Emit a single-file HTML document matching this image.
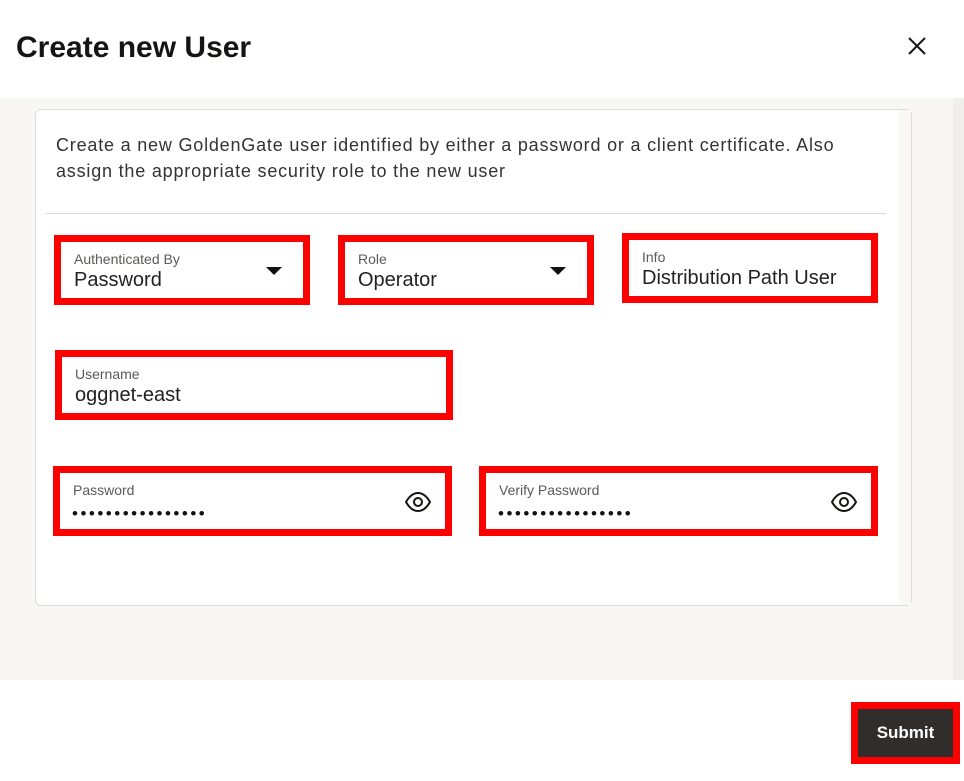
<!DOCTYPE html>
<html><head><meta charset="utf-8"><style>
*{margin:0;padding:0;box-sizing:border-box}
body{width:964px;height:781px;background:#fff;position:relative;overflow:hidden;font-family:"Liberation Sans",sans-serif;color:#161513}
.abs{position:absolute}
h1{position:absolute;left:16px;top:31px;font-size:30px;font-weight:bold;color:#161513}
.band{left:0;top:98px;width:953px;height:582px;background:#f8f7f5}
.osb{left:953px;top:98px;width:11px;height:582px;background:#efeeec}
.card{left:35px;top:109px;width:877px;height:497px;background:#fff;border:1px solid #dedcd8;border-radius:6px}
.csb{left:899px;top:110px;width:12px;height:495px;background:#f9f8f7}
.desc{left:56px;top:132px;font-size:18px;line-height:26px;color:#333;width:825px;letter-spacing:0.8px}
.div{left:46px;top:213px;width:840px;height:1px;background:#dcdad6}
.f{position:absolute;border:7px solid #f00;background:#fff}
.lab{position:absolute;left:13px;top:9px;font-size:14px;color:#5c5a57}
.val{position:absolute;left:13px;top:27px;font-size:20px;color:#222}
.dots{position:absolute;left:12px;top:31px;font-size:17px;letter-spacing:2.5px;color:#111}
.arr{position:absolute;right:21px;top:25px;width:0;height:0;border-left:8px solid transparent;border-right:8px solid transparent;border-top:8px solid #111}
.eye{position:absolute;right:13px;top:18px}
.btn{left:851px;top:702px;width:109px;height:62px;border:7px solid #f00;background:#312d2a;color:#fff;font-weight:bold;font-size:17px;text-align:center;line-height:47px}
</style></head><body>
<h1>Create new User</h1>
<svg class="abs" style="left:907px;top:36px" width="20" height="20" viewBox="0 0 20 20"><path d="M2 2L18 18M18 2L2 18" stroke="#161513" stroke-width="2"/></svg>
<div class="abs band"></div>
<div class="abs osb"></div>
<div class="abs card"></div>
<div class="abs csb"></div>
<div class="abs desc">Create a new GoldenGate user identified by either a password or a client certificate. Also assign the appropriate security role to the new user</div>
<div class="abs div"></div>

<div class="f" style="left:54px;top:235px;width:256px;height:70px"><div class="lab">Authenticated By</div><div class="val">Password</div><div class="arr"></div></div>
<div class="f" style="left:338px;top:235px;width:256px;height:70px"><div class="lab">Role</div><div class="val">Operator</div><div class="arr"></div></div>
<div class="f" style="left:622px;top:233px;width:256px;height:70px"><div class="lab">Info</div><div class="val">Distribution Path User</div></div>
<div class="f" style="left:55px;top:350px;width:398px;height:70px"><div class="lab">Username</div><div class="val">oggnet-east</div></div>
<div class="f" style="left:53px;top:466px;width:399px;height:70px"><div class="lab">Password</div><div class="dots">••••••••••••••••</div>
<svg class="eye" width="28" height="22" viewBox="0 0 28 22"><path d="M2 11C6 4 10 2 14 2S22 4 26 11C22 18 18 20 14 20S6 18 2 11Z" fill="none" stroke="#161513" stroke-width="2"/><circle cx="14" cy="11" r="4" fill="none" stroke="#161513" stroke-width="2"/></svg></div>
<div class="f" style="left:479px;top:466px;width:399px;height:70px"><div class="lab">Verify Password</div><div class="dots">••••••••••••••••</div>
<svg class="eye" width="28" height="22" viewBox="0 0 28 22"><path d="M2 11C6 4 10 2 14 2S22 4 26 11C22 18 18 20 14 20S6 18 2 11Z" fill="none" stroke="#161513" stroke-width="2"/><circle cx="14" cy="11" r="4" fill="none" stroke="#161513" stroke-width="2"/></svg></div>

<div class="abs btn">Submit</div>
</body></html>
